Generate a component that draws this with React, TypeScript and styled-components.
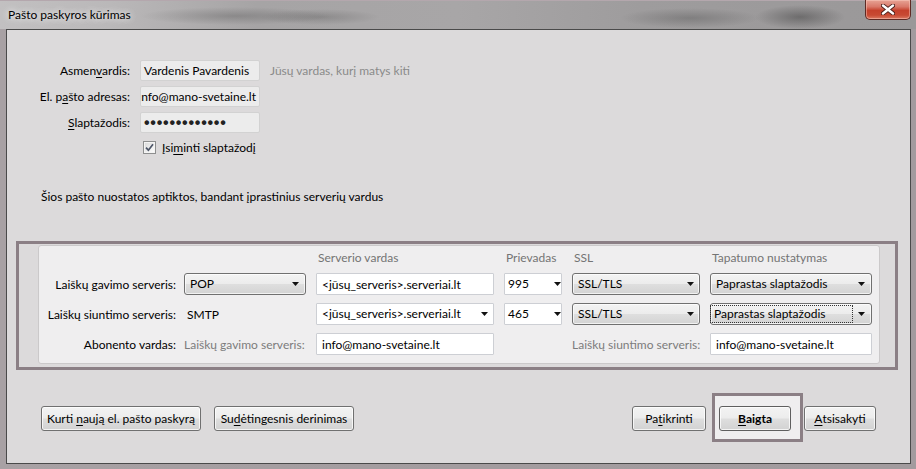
import React from 'react';
import styled, { createGlobalStyle } from 'styled-components';

const Global = createGlobalStyle`
  html, body { margin: 0; padding: 0; width: 916px; height: 469px; overflow: hidden; background: #a59ea1; }
  body { font-family: Lato, "Noto Sans", sans-serif; font-size: 12px; color: #000; }
  * { box-sizing: border-box; }
`;

const Window = styled.div`
  width: 916px;
  height: 469px;
  display: flex;
  flex-direction: column;
  padding: 0 5px 5px 6px;
  background: linear-gradient(90deg, #a8a1a4 0%, #a39c9f 50%, #a29b9e 100%);
`;

const TitleBar = styled.div`
  height: 29px;
  margin: 0 -5px 0 -6px;
  padding: 0 5px 0 8px;
  display: flex;
  justify-content: space-between;
  align-items: flex-start;
  background:
    radial-gradient(ellipse 95px 9px at 235px 15px, rgba(60, 60, 60, 0.28), transparent),
    radial-gradient(ellipse 60px 8px at 320px 16px, rgba(60, 60, 60, 0.25), transparent),
    radial-gradient(ellipse 70px 10px at 690px 17px, rgba(60, 60, 60, 0.3), transparent),
    radial-gradient(ellipse 45px 12px at 800px 16px, rgba(40, 40, 40, 0.4), transparent),
    linear-gradient(90deg, #c2c0c1 0%, #bab8b9 12%, #a6a4a5 28%, #a8a6a7 50%, #9e9c9d 70%, #9a9899 100%);
  border-top: 1px solid #b4a7ad;
`;

const TitleText = styled.div`
  margin-top: 6px;
  line-height: 16px;
  font-size: 12px;
  color: #000;
  text-shadow: 0 0 6px rgba(255, 255, 255, 0.9), 0 0 10px rgba(255, 255, 255, 0.6);
`;

const CloseButton = styled.div`
  width: 46px;
  height: 20px;
  margin-top: -1px;
  display: flex;
  align-items: center;
  justify-content: center;
  border: 1px solid #5e2a24;
  border-top: none;
  border-radius: 0 0 5px 5px;
  background: linear-gradient(180deg, #e7a395 0%, #d9796a 35%, #c5412c 55%, #c84a33 80%, #db7a63 100%);
  box-shadow: inset 0 0 0 1px rgba(255, 210, 200, 0.45);
`;

const Client = styled.div`
  flex: 1;
  display: flex;
  flex-direction: column;
  border: 1px solid #4a4a4a;
  background: #dcdadb;
`;

const FormGrid = styled.div`
  margin: 30px 0 0 13px;
  display: grid;
  grid-template-columns: 110px 120px auto;
  grid-auto-rows: 21px;
  column-gap: 10px;
  row-gap: 5px;
  align-items: center;
`;

const Label = styled.div`
  text-align: right;
  white-space: nowrap;
`;

const Key = styled.span`
  text-decoration: underline;
  text-underline-offset: 2px;
`;

const SoftField = styled.div<{ $end?: boolean }>`
  height: 21px;
  display: flex;
  align-items: center;
  justify-content: ${p => (p.$end ? 'flex-end' : 'flex-start')};
  padding: 0 3px;
  overflow: hidden;
  white-space: nowrap;
  background: #ececec;
  border: 1px solid #d2d2d2;
  border-radius: 2px;
`;

const Dots = styled.span`
  font-family: "Liberation Sans", sans-serif;
  font-size: 16px;
  font-weight: bold;
  letter-spacing: 0.75px;
  line-height: 16px;
  color: #222;
`;

const Hint = styled.div`
  color: #8a8a8a;
  white-space: nowrap;
`;

const CheckRow = styled.label`
  grid-column: 2 / span 2;
  align-self: start;
  margin-top: 3px;
  margin-left: 3px;
  height: 13px;
  display: flex;
  align-items: center;
  gap: 6px;
  white-space: nowrap;
`;

const CheckBoxBox = styled.span`
  width: 13px;
  height: 13px;
  display: inline-flex;
  align-items: center;
  justify-content: center;
  border: 1px solid #8e8f8f;
  background: linear-gradient(135deg, #d8d8d8 0%, #f4f4f4 70%, #ffffff 100%);
  box-shadow: inset 0 0 0 1px #f4f4f4;
`;

const InfoText = styled.div`
  margin: 30px 0 0 34px;
  line-height: 16px;
`;

const Highlight = styled.div`
  margin: 36px 12px 0 9px;
  padding: 1px 15px 3px 19px;
  border: 3px solid #8b7f85;
`;

const Panel = styled.div`
  display: grid;
  grid-template-columns: 129px 122px 178px 58px 128px 162px;
  grid-template-rows: 14px 22px 22px 22px;
  column-gap: 10px;
  row-gap: 8px;
  align-items: center;
  padding: 5px 7px 8px 6px;
  background: #efeeef;
  border: 1px solid #cbc9ca;
  border-radius: 3px;
`;

const HeadCell = styled.div<{ $col: number }>`
  grid-column: ${p => p.$col};
  padding-left: 2px;
  line-height: 14px;
  color: #747474;
  white-space: nowrap;
`;

const RowLabel = styled.div`
  grid-column: 1;
  margin-right: -2px;
  text-align: right;
  white-space: nowrap;
`;

const Plain = styled.div<{ $muted?: boolean; $pad?: number }>`
  padding-left: ${p => p.$pad ?? 0}px;
  white-space: nowrap;
  color: ${p => (p.$muted ? '#7c7c7c' : '#000')};
`;

const Field = styled.div`
  height: 22px;
  display: flex;
  align-items: center;
  padding-left: 5px;
  white-space: nowrap;
  background: #ffffff;
  border: 1px solid #cdcfd4;
  border-radius: 1px;
`;

const Combo = styled.div<{ $edit?: boolean; $pad: number; $arrowPad: number }>`
  height: 22px;
  display: flex;
  align-items: center;
  padding: 0 ${p => p.$arrowPad}px 0 ${p => p.$pad}px;
  white-space: nowrap;
  border: 1px solid ${p => (p.$edit ? '#cdcfd4' : '#707070')};
  border-radius: ${p => (p.$edit ? '1px' : '3px')};
  background: ${p =>
    p.$edit
      ? '#ffffff'
      : 'linear-gradient(180deg, #f3f3f3 0%, #ececec 48%, #dedede 52%, #d3d3d3 100%)'};
  box-shadow: ${p => (p.$edit ? 'none' : 'inset 0 0 0 1px rgba(255,255,255,0.7)')};
`;

const ComboValue = styled.span<{ $focus?: boolean }>`
  flex: 1;
  height: 16px;
  line-height: 16px;
  padding-left: 3px;
  margin-right: 6px;
  outline: ${p => (p.$focus ? '1px dotted #333' : 'none')};
`;

const ButtonRow = styled.div`
  margin: 36px 34px 0 34px;
  display: flex;
  justify-content: space-between;
`;

const ButtonGroup = styled.div`
  display: flex;
  gap: 13px;
`;

const Button = styled.div<{ $w: number; $bold?: boolean }>`
  width: ${p => p.$w}px;
  height: 25px;
  display: flex;
  align-items: center;
  justify-content: center;
  white-space: nowrap;
  border: 1px solid ${p => (p.$bold ? '#5f5f5f' : '#707070')};
  border-radius: 3px;
  background: linear-gradient(180deg, #f3f3f3 0%, #ececec 48%, #dedede 52%, #d2d2d2 100%);
  box-shadow: inset 0 0 0 1px rgba(255, 255, 255, 0.75);
  font-weight: ${p => (p.$bold ? 700 : 400)};
`;

const DefaultMark = styled.div`
  position: relative;
  z-index: 0;
  &::before {
    content: '';
    position: absolute;
    z-index: -1;
    top: -13px;
    bottom: -11px;
    left: -7px;
    right: -12px;
    border: 3px solid #8b7f85;
    background: #efeeef;
  }
`;

const Arrow = () => (
  <svg width="7" height="4" viewBox="0 0 7 4">
    <path d="M0 0 H7 L3.5 4 Z" fill="#111" />
  </svg>
);

const CloseGlyph = () => (
  <svg width="14" height="11" viewBox="0 0 14 11">
    <path d="M2 1.5 L12 9.5 M12 1.5 L2 9.5" stroke="#4b1f1a" strokeWidth="4.2" strokeLinecap="round" />
    <path d="M2 1.5 L12 9.5 M12 1.5 L2 9.5" stroke="#ffffff" strokeWidth="2.4" strokeLinecap="round" />
  </svg>
);

const CheckGlyph = () => (
  <svg width="9" height="9" viewBox="0 0 9 9">
    <path d="M1 4.6 L3.4 7.2 L8 1.2" stroke="#4d5668" strokeWidth="1.7" fill="none" />
  </svg>
);

type ComboProps = { value: string; edit?: boolean; pad: number; arrowPad: number; focus?: boolean };
const ComboBox = ({ value, edit, pad, arrowPad, focus }: ComboProps) => (
  <Combo $edit={edit} $pad={pad} $arrowPad={arrowPad}>
    <ComboValue $focus={focus}>{value}</ComboValue>
    <Arrow />
  </Combo>
);

export default function App() {
  return (
    <>
      <Global />
      <Window>
        <TitleBar>
          <TitleText>Pašto paskyros kūrimas</TitleText>
          <CloseButton>
            <CloseGlyph />
          </CloseButton>
        </TitleBar>
        <Client>
          <FormGrid>
            <Label>
              Asmen<Key>v</Key>ardis:
            </Label>
            <SoftField>Vardenis Pavardenis</SoftField>
            <Hint>Jūsų vardas, kurį matys kiti</Hint>

            <Label>
              El. p<Key>a</Key>što adresas:
            </Label>
            <SoftField $end>info@mano-svetaine.lt</SoftField>
            <span />

            <Label>
              <Key>S</Key>laptažodis:
            </Label>
            <SoftField>
              <Dots>•••••••••••••</Dots>
            </SoftField>
            <span />

            <CheckRow>
              <CheckBoxBox>
                <CheckGlyph />
              </CheckBoxBox>
              <span>
                Įsi<Key>m</Key>inti slaptažodį
              </span>
            </CheckRow>
          </FormGrid>

          <InfoText>Šios pašto nuostatos aptiktos, bandant įprastinius serverių vardus</InfoText>

          <Highlight>
            <Panel>
              <HeadCell $col={3}>Serverio vardas</HeadCell>
              <HeadCell $col={4}>Prievadas</HeadCell>
              <HeadCell $col={5}>SSL</HeadCell>
              <HeadCell $col={6}>Tapatumo nustatymas</HeadCell>

              <RowLabel>Laiškų gavimo serveris:</RowLabel>
              <ComboBox value="POP" pad={2} arrowPad={6} />
              <Field>&lt;jūsų_serveris&gt;.serveriai.lt</Field>
              <ComboBox value="995" edit pad={-2} arrowPad={4} />
              <ComboBox value="SSL/TLS" pad={2} arrowPad={5} />
              <ComboBox value="Paprastas slaptažodis" pad={2} arrowPad={6} />

              <RowLabel>Laiškų siuntimo serveris:</RowLabel>
              <Plain $pad={3}>SMTP</Plain>
              <ComboBox value="<jūsų_serveris>.serveriai.lt" edit pad={2} arrowPad={5} />
              <ComboBox value="465" edit pad={-2} arrowPad={4} />
              <ComboBox value="SSL/TLS" pad={2} arrowPad={5} />
              <ComboBox value="Paprastas slaptažodis" pad={0} arrowPad={6} focus />

              <RowLabel>Abonento vardas:</RowLabel>
              <Plain $muted>Laiškų gavimo serveris:</Plain>
              <Field>info@mano-svetaine.lt</Field>
              <span />
              <Plain $muted>Laiškų siuntimo serveris:</Plain>
              <Field>info@mano-svetaine.lt</Field>
            </Panel>
          </Highlight>

          <ButtonRow>
            <ButtonGroup>
              <Button $w={160}>
                Kurti&nbsp;<Key>n</Key>aują el. pašto paskyrą
              </Button>
              <Button $w={140}>
                Su<Key>d</Key>ėtingesnis derinimas
              </Button>
            </ButtonGroup>
            <ButtonGroup>
              <Button $w={74}>
                Pa<Key>t</Key>ikrinti
              </Button>
              <DefaultMark>
                <Button $w={72} $bold>
                  <Key>B</Key>aigta
                </Button>
              </DefaultMark>
              <Button $w={72}>
                <Key>A</Key>tsisakyti
              </Button>
            </ButtonGroup>
          </ButtonRow>
        </Client>
      </Window>
    </>
  );
}
